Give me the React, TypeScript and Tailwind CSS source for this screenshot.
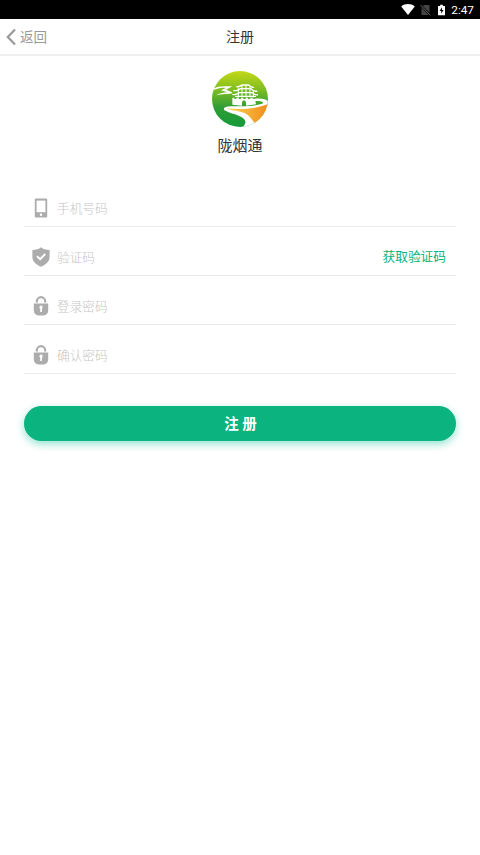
import React from 'react';

type IconProps = { className?: string };

const WifiIcon: React.FC<IconProps> = ({ className }) => (
  <svg viewBox="0 0 14 11" className={className} fill="currentColor">
    <path d="M7 11 0.2 2.4C4-0.7 10-0.7 13.8 2.4z" />
  </svg>
);

const NoSimIcon: React.FC<IconProps> = ({ className }) => (
  <svg viewBox="0 0 11 12" className={className}>
    <path d="M4 1h5.5v10H1.5V3.5z" fill="#444" />
    <path d="M0.5 1.2 10.5 11.2" stroke="#000" strokeWidth="2" />
    <path d="M0.5 1 10.5 11.4" stroke="#666" strokeWidth="1" />
  </svg>
);

const BatteryIcon: React.FC<IconProps> = ({ className }) => (
  <svg viewBox="0 0 8 12" className={className}>
    <path d="M2.5 0h3v1.3H8V12H0V1.3h2.5z" fill="#fff" />
    <path d="M4.6 2.8 1.9 7h1.8v3.4L6.3 6H4.6z" fill="#000" />
  </svg>
);

const PhoneIcon: React.FC<IconProps> = ({ className }) => (
  <svg viewBox="0 0 18 20" className={className}>
    <rect x="2.8" y="0.6" width="12.4" height="18.8" rx="1.2" fill="#acacac" />
    <rect x="4.6" y="2.6" width="8.8" height="11.6" fill="#fff" />
    <circle cx="9" cy="16.7" r="1.2" fill="#fff" />
  </svg>
);

const ShieldIcon: React.FC<IconProps> = ({ className }) => (
  <svg viewBox="0 0 18 20" className={className}>
    <path
      d="M9 0.3C7 2 4 3 0.4 3v7c0 4.6 3.8 7.8 8.6 9.7 4.8-1.9 8.6-5.1 8.6-9.7V3C14 3 11 2 9 0.3z"
      fill="#acacac"
    />
    <path d="M5 9.2 8.1 12.2 13.2 7" fill="none" stroke="#fff" strokeWidth="1.9" />
  </svg>
);

const LockIcon: React.FC<IconProps> = ({ className }) => (
  <svg viewBox="0 0 18 20" className={className}>
    <path d="M4.8 6.6V5.4a4.2 4.2 0 0 1 8.4 0V6.6" fill="none" stroke="#acacac" strokeWidth="2.2" />
    <path d="M1.8 7.6h14.4v6.6c0 3.4-2 5.2-4.6 5.2H6.4C3.8 19.4 1.8 17.6 1.8 14.2z" fill="#acacac" />
    <path d="M9 9.6a1.8 1.8 0 0 1 0.9 3.3V16H8.2v-3.1A1.8 1.8 0 0 1 9 9.6z" fill="#fff" />
  </svg>
);

const Logo: React.FC<IconProps> = ({ className }) => (
  <svg viewBox="22 22 168 168" className={className}>
    <defs>
      <linearGradient id="sky" x1="0" y1="0" x2="0" y2="1">
        <stop offset="0" stopColor="#c4d916" />
        <stop offset="0.3" stopColor="#86c020" />
        <stop offset="0.65" stopColor="#2f9e35" />
        <stop offset="1" stopColor="#159a3a" />
      </linearGradient>
      <linearGradient id="field" x1="0" y1="0" x2="1" y2="0">
        <stop offset="0" stopColor="#f8d850" />
        <stop offset="1" stopColor="#f28a1d" />
      </linearGradient>
      <clipPath id="disc">
        <circle cx="106" cy="106" r="84" />
      </clipPath>
    </defs>
    <g clipPath="url(#disc)">
      <rect x="22" y="22" width="168" height="168" fill="url(#sky)" />
      {/* clouds */}
      <path d="M26 75C42 66 62 69 83 68L64 78C73 82 80 83 84 88 72 92 52 90 34 95 46 88 58 87 68 86L49 80 64 73C50 70 40 74 26 79z" fill="#fff" />
      {/* river and field */}
      <path
        d="M150 105C172 103 188 106 192 116V178L128 192H112C122 182 126 174 118 166 106 154 78 150 58 139 56 131 64 128 84 128 112 128 156 128 175 119 178 113 164 111 150 112z"
        fill="#fff"
      />
      <path d="M66 134C96 137 148 139 192 120V172L152 180C142 170 138 158 120 148 100 141 78 141 66 134z" fill="url(#field)" />
      {/* gate tower */}
      <g fill="none" stroke="#fff" strokeWidth="3">
        <path d="M95 68C102 72 108 67 112 64H132C138 70 142 72 148 71" strokeWidth="4" />
        <path d="M86 80C96 84 102 78 108 75H139C144 81 151 84 158 82" strokeWidth="4" />
        <path d="M83 92C91 95 98 91 104 87H142C148 92 153 95 160 93" strokeWidth="4" />
        <path d="M101 72V102M112 66V101M124 64V101M136 69V101M146 81V102" />
        <path d="M91 98H154" strokeWidth="4" />
      </g>
      <path d="M83 102h6v4h6v-4h7v4h7v-4h7v4h7v-4h7v4h7v-4h7v4h7l3 16-30 4v-9c0-10-12-10-12 0v9l-29-3z" fill="#fff" />
    </g>
  </svg>
);

type Field = {
  name: string;
  placeholder: string;
  type: string;
  Icon: React.FC<IconProps>;
  action?: string;
};

const fields: Field[] = [
  { name: 'phone', placeholder: '手机号码', type: 'tel', Icon: PhoneIcon },
  { name: 'code', placeholder: '验证码', type: 'text', Icon: ShieldIcon, action: '获取验证码' },
  { name: 'password', placeholder: '登录密码', type: 'password', Icon: LockIcon },
  { name: 'confirm', placeholder: '确认密码', type: 'password', Icon: LockIcon },
];

const FieldRow: React.FC<{ field: Field }> = ({ field }) => {
  const { Icon } = field;
  return (
    <div className="flex h-[49px] items-center border-b border-[#ebebeb] pt-3 pr-2.5 pl-2">
      <Icon className="h-5 w-[18px] shrink-0" />
      <input
        name={field.name}
        type={field.type}
        placeholder={field.placeholder}
        className="ml-[7px] min-w-0 flex-1 bg-transparent text-[12.7px] leading-5 outline-none placeholder:font-light placeholder:text-[#c6c6c6]"
      />
      {field.action && (
        <button type="button" className="pb-0.5 text-[12.7px] leading-5 text-[#0bb37e]">
          {field.action}
        </button>
      )}
    </div>
  );
};

export default function App() {
  return (
    <div className="flex min-h-screen flex-col bg-white font-['Noto_Sans_CJK_SC',sans-serif] text-[#333]">
      <div className="flex h-[19px] items-center justify-end bg-black pr-1.5 text-white">
        <WifiIcon className="h-[11px] w-3.5" />
        <NoSimIcon className="ml-[5px] h-3 w-[11px]" />
        <BatteryIcon className="ml-[7px] h-3 w-[7px]" />
        <span className="ml-1.5 pt-px font-[Roboto,sans-serif] text-[11.8px] leading-[18px]">2:47</span>
      </div>

      <header className="grid h-[37px] grid-cols-3 items-center border-b-2 border-[#f0f0f0]">
        <button type="button" className="flex items-center pl-1.5 text-[13.5px] leading-5 text-[#999]">
          <svg viewBox="0 0 10 18" className="mr-1 h-[18px] w-2.5" fill="none" stroke="currentColor" strokeWidth="2.2">
            <path d="M9 1.5 1.8 9 9 16.5" />
          </svg>
          <span className="pb-0.5">返回</span>
        </button>
        <h1 className="pb-px text-center text-[14px] leading-5">注册</h1>
      </header>

      <main className="px-6">
        <div className="flex flex-col items-center pt-[15px]">
          <Logo className="size-14" />
          <p className="mt-2 text-[15px] leading-5">陇烟通</p>
        </div>

        <form className="mt-[23px]">
          {fields.map((field) => (
            <FieldRow key={field.name} field={field} />
          ))}
          <button
            type="button"
            className="mt-8 h-[35px] w-full rounded-full bg-[#0bb37e] pb-0.5 pl-px text-[14.5px] font-bold text-white shadow-[0_3px_8px_rgba(11,190,150,0.45)]"
          >
            注 册
          </button>
        </form>
      </main>
    </div>
  );
}
